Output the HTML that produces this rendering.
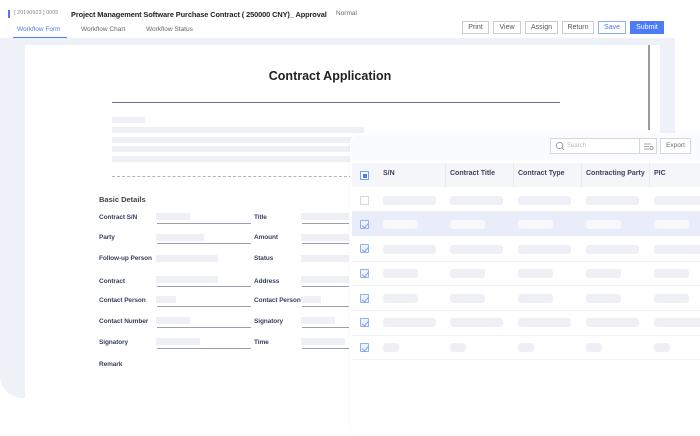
<!DOCTYPE html>
<html><head><meta charset="utf-8"><style>
*{margin:0;padding:0;box-sizing:border-box}
body{width:700px;height:436px;background:#fff;position:relative;overflow:hidden;font-family:"Liberation Sans","Noto Sans CJK SC",sans-serif;color:#333}
.a{position:absolute}
.bar{position:absolute;background:#eef0f5}
.lbl{position:absolute;font-size:6.5px;color:#3a4262;font-weight:600;letter-spacing:-0.1px}
.ul{position:absolute;height:1px;background:#9aa0b4}
.btn{position:absolute;top:21px;height:13px;border:1px solid #c8ccd4;font-size:7px;color:#555;text-align:center;line-height:11px;background:#fff}
.th{position:absolute;top:170px;font-size:7px;font-weight:bold;color:#3a4262}
.cb{position:absolute;left:360px;width:9px;height:9px;border:1px solid #8fb0f5;border-radius:1px;background:#eef3ff}
.cb::after{content:"";position:absolute;left:2px;top:1px;width:3px;height:5px;border-right:1px solid #7aa0f0;border-bottom:1px solid #7aa0f0;transform:rotate(40deg)}
.cell{position:absolute;height:9px;border-radius:3px;background:#eef0f5}
.hl .cell{background:#f8f9fd}
.rl{position:absolute;left:352px;width:348px;height:1px;background:#f0f1f5}
</style></head><body>
<div class="a" style="left:8px;top:10px;width:2px;height:8px;background:#4b7bf5"></div>
<div class="a" style="left:14px;top:10px;font-size:5.5px;color:#888">[ 20190923 ] 0005</div>
<div class="a" style="left:71px;top:9.5px;font-size:7.4px;font-weight:bold;color:#222;letter-spacing:-0.1px;white-space:nowrap">Project Management Software Purchase Contract ( 250000 CNY)_ Approval</div>
<div class="a" style="left:336px;top:10px;font-size:6.5px;color:#666">Normal</div>
<div class="a" style="left:17px;top:26px;font-size:6.5px;color:#4b7bf5">Workflow Form</div>
<div class="a" style="left:13px;top:37px;width:54px;height:1px;background:#4b7bf5"></div>
<div class="a" style="left:81px;top:26px;font-size:6.5px;color:#666">Workflow Chart</div>
<div class="a" style="left:146px;top:26px;font-size:6.5px;color:#666">Workflow Status</div>
<div class="btn" style="left:462px;width:27px">Print</div>
<div class="btn" style="left:493px;width:28px">View</div>
<div class="btn" style="left:525px;width:33px">Assign</div>
<div class="btn" style="left:562px;width:32px">Return</div>
<div class="btn" style="left:598px;width:28px;border-color:#8fb0f5;color:#4b7bf5">Save</div>
<div class="btn" style="left:630px;width:34px;background:#4b7bf5;border-color:#4b7bf5;color:#fff">Submit</div>
<div class="a" style="left:0;top:38px;width:675px;height:360px;background:#eef1f7;border-bottom-left-radius:22px"></div>
<div class="a" style="left:25px;top:45px;width:635px;height:353px;background:#fff"></div>
<div class="a" style="left:648px;top:45px;width:2px;height:85px;background:#999"></div>
<div class="a" style="left:25px;top:69px;width:610px;text-align:center;font-size:12.5px;font-weight:bold;color:#222">Contract Application</div>
<div class="a" style="left:112px;top:102px;width:448px;height:1px;background:#6a7190"></div>
<div class="bar" style="left:112px;top:117px;width:33px;height:6px"></div>
<div class="bar" style="left:112px;top:127px;width:252px;height:6px"></div>
<div class="bar" style="left:112px;top:137px;width:250px;height:6px"></div>
<div class="bar" style="left:112px;top:146px;width:250px;height:6px"></div>
<div class="bar" style="left:112px;top:156px;width:250px;height:6px"></div>
<div class="a" style="left:112px;top:176px;width:240px;border-top:1px dashed #b0b4c4"></div>
<div class="a" style="left:99px;top:195px;font-size:7.5px;font-weight:bold;color:#444">Basic Details</div>
<div class="lbl" style="left:99px;top:214px">Contract S/N</div><div class="bar" style="left:156px;top:213px;width:34px;height:7px"></div><div class="ul" style="left:157px;top:223px;width:94px"></div>
<div class="lbl" style="left:99px;top:234px">Party</div><div class="bar" style="left:156px;top:234px;width:48px;height:7px"></div><div class="ul" style="left:157px;top:243px;width:94px"></div>
<div class="lbl" style="left:99px;top:255px">Follow-up Person</div><div class="bar" style="left:156px;top:255px;width:62px;height:7px"></div>
<div class="lbl" style="left:99px;top:278px">Contract</div><div class="bar" style="left:156px;top:276px;width:62px;height:7px"></div><div class="ul" style="left:157px;top:286px;width:94px"></div>
<div class="lbl" style="left:99px;top:297px">Contact Person</div><div class="bar" style="left:156px;top:296px;width:20px;height:7px"></div><div class="ul" style="left:157px;top:306px;width:94px"></div>
<div class="lbl" style="left:99px;top:318px">Contact Number</div><div class="bar" style="left:156px;top:317px;width:34px;height:7px"></div><div class="ul" style="left:157px;top:327px;width:94px"></div>
<div class="lbl" style="left:99px;top:339px">Signatory</div><div class="bar" style="left:156px;top:338px;width:44px;height:7px"></div><div class="ul" style="left:157px;top:348px;width:94px"></div>
<div class="lbl" style="left:99px;top:361px">Remark</div>
<div class="lbl" style="left:254px;top:214px">Title</div><div class="bar" style="left:301px;top:213px;width:48px;height:7px"></div><div class="ul" style="left:302px;top:223px;width:47px"></div>
<div class="lbl" style="left:254px;top:234px">Amount</div><div class="bar" style="left:301px;top:234px;width:48px;height:7px"></div><div class="ul" style="left:302px;top:243px;width:47px"></div>
<div class="lbl" style="left:254px;top:255px">Status</div><div class="bar" style="left:301px;top:255px;width:48px;height:7px"></div>
<div class="lbl" style="left:254px;top:278px">Address</div><div class="bar" style="left:301px;top:276px;width:48px;height:7px"></div><div class="ul" style="left:302px;top:286px;width:47px"></div>
<div class="lbl" style="left:254px;top:297px">Contact Person</div><div class="bar" style="left:301px;top:296px;width:20px;height:7px"></div><div class="ul" style="left:302px;top:306px;width:47px"></div>
<div class="lbl" style="left:254px;top:318px">Signatory</div><div class="bar" style="left:301px;top:317px;width:34px;height:7px"></div><div class="ul" style="left:302px;top:327px;width:47px"></div>
<div class="lbl" style="left:254px;top:339px">Time</div><div class="bar" style="left:301px;top:338px;width:44px;height:7px"></div><div class="ul" style="left:302px;top:348px;width:47px"></div>
<!-- table panel -->
<div class="a" style="left:350px;top:133px;width:360px;height:300px;background:#fff;border-radius:10px;box-shadow:0 0 4px rgba(120,130,160,.06)"></div>
<div class="a" style="left:351px;top:134px;width:349px;height:26px;background:#fafbfd;border-top-left-radius:10px"></div>
<div class="a" style="left:550px;top:138px;width:107px;height:16px;border:1px solid #d5d8e0;background:#fff"></div>
<div class="a" style="left:639px;top:138px;width:1px;height:16px;background:#d5d8e0"></div>
<svg class="a" style="left:555px;top:141px" width="10" height="10"><circle cx="4.5" cy="4.5" r="3.2" fill="none" stroke="#999" stroke-width="0.9"/><path d="M7 7L9 9" stroke="#999" stroke-width="0.9"/></svg>
<div class="a" style="left:567px;top:143px;font-size:6px;color:#bbb">Search</div>
<svg class="a" style="left:643px;top:142px" width="12" height="9"><path d="M1 2H8M1 4.5H6M1 7H6" stroke="#888" stroke-width="0.8"/><circle cx="8.5" cy="6" r="1.6" fill="none" stroke="#888" stroke-width="0.7"/></svg>
<div class="a" style="left:660px;top:138px;width:31px;height:16px;border:1px solid #d5d8e0;font-size:6.5px;color:#666;text-align:center;line-height:14px;background:#fff">Export</div>
<div class="a" style="left:352px;top:163px;width:348px;height:24px;background:#f5f6fa"></div>
<div class="a" style="left:445px;top:163px;width:1px;height:24px;background:#e8eaf0"></div>
<div class="a" style="left:513px;top:163px;width:1px;height:24px;background:#e8eaf0"></div>
<div class="a" style="left:581px;top:163px;width:1px;height:24px;background:#e8eaf0"></div>
<div class="a" style="left:649px;top:163px;width:1px;height:24px;background:#e8eaf0"></div>
<div class="a" style="left:360px;top:171px;width:9px;height:9px;border:1px solid #7aa0f0;background:#fff"><div style="margin:1.5px;width:4px;height:4px;background:#4b7bf5"></div></div>
<div class="th" style="left:383px">S/N</div>
<div class="th" style="left:450px">Contract Title</div>
<div class="th" style="left:518px">Contract Type</div>
<div class="th" style="left:586px">Contracting Party</div>
<div class="th" style="left:654px">PIC</div>
<div class="a" style="left:360px;top:196px;width:9px;height:9px;border:1px solid #d5d8e0;background:#fff"></div>
<div class="cell" style="left:383px;top:196px;width:53px"></div><div class="cell" style="left:450px;top:196px;width:53px"></div><div class="cell" style="left:518px;top:196px;width:53px"></div><div class="cell" style="left:586px;top:196px;width:53px"></div><div class="cell" style="left:654px;top:196px;width:53px"></div>
<div class="rl" style="top:211px"></div>
<div class="a hl" style="left:352px;top:212px;width:348px;height:24px;background:#e8edf9">
<div class="cell" style="left:31px;top:8px;width:35px"></div><div class="cell" style="left:98px;top:8px;width:35px"></div><div class="cell" style="left:166px;top:8px;width:35px"></div><div class="cell" style="left:234px;top:8px;width:35px"></div><div class="cell" style="left:302px;top:8px;width:35px"></div></div>
<div class="cb" style="top:220px"></div>
<div class="cb" style="top:244px"></div>
<div class="cell" style="left:383px;top:245px;width:53px"></div><div class="cell" style="left:450px;top:245px;width:53px"></div><div class="cell" style="left:518px;top:245px;width:53px"></div><div class="cell" style="left:586px;top:245px;width:53px"></div><div class="cell" style="left:654px;top:245px;width:53px"></div>
<div class="rl" style="top:261px"></div>
<div class="cb" style="top:269px"></div>
<div class="cell" style="left:383px;top:269px;width:35px"></div><div class="cell" style="left:450px;top:269px;width:35px"></div><div class="cell" style="left:518px;top:269px;width:35px"></div><div class="cell" style="left:586px;top:269px;width:35px"></div><div class="cell" style="left:654px;top:269px;width:35px"></div>
<div class="rl" style="top:285px"></div>
<div class="cb" style="top:294px"></div>
<div class="cell" style="left:383px;top:294px;width:35px"></div><div class="cell" style="left:450px;top:294px;width:35px"></div><div class="cell" style="left:518px;top:294px;width:35px"></div><div class="cell" style="left:586px;top:294px;width:35px"></div><div class="cell" style="left:654px;top:294px;width:35px"></div>
<div class="rl" style="top:310px"></div>
<div class="cb" style="top:318px"></div>
<div class="cell" style="left:383px;top:318px;width:53px"></div><div class="cell" style="left:450px;top:318px;width:53px"></div><div class="cell" style="left:518px;top:318px;width:53px"></div><div class="cell" style="left:586px;top:318px;width:53px"></div><div class="cell" style="left:654px;top:318px;width:53px"></div>
<div class="rl" style="top:335px"></div>
<div class="cb" style="top:343px"></div>
<div class="cell" style="left:383px;top:343px;width:16px"></div><div class="cell" style="left:450px;top:343px;width:16px"></div><div class="cell" style="left:518px;top:343px;width:16px"></div><div class="cell" style="left:586px;top:343px;width:16px"></div><div class="cell" style="left:654px;top:343px;width:16px"></div>
<div class="rl" style="top:359px"></div>
</body></html>
